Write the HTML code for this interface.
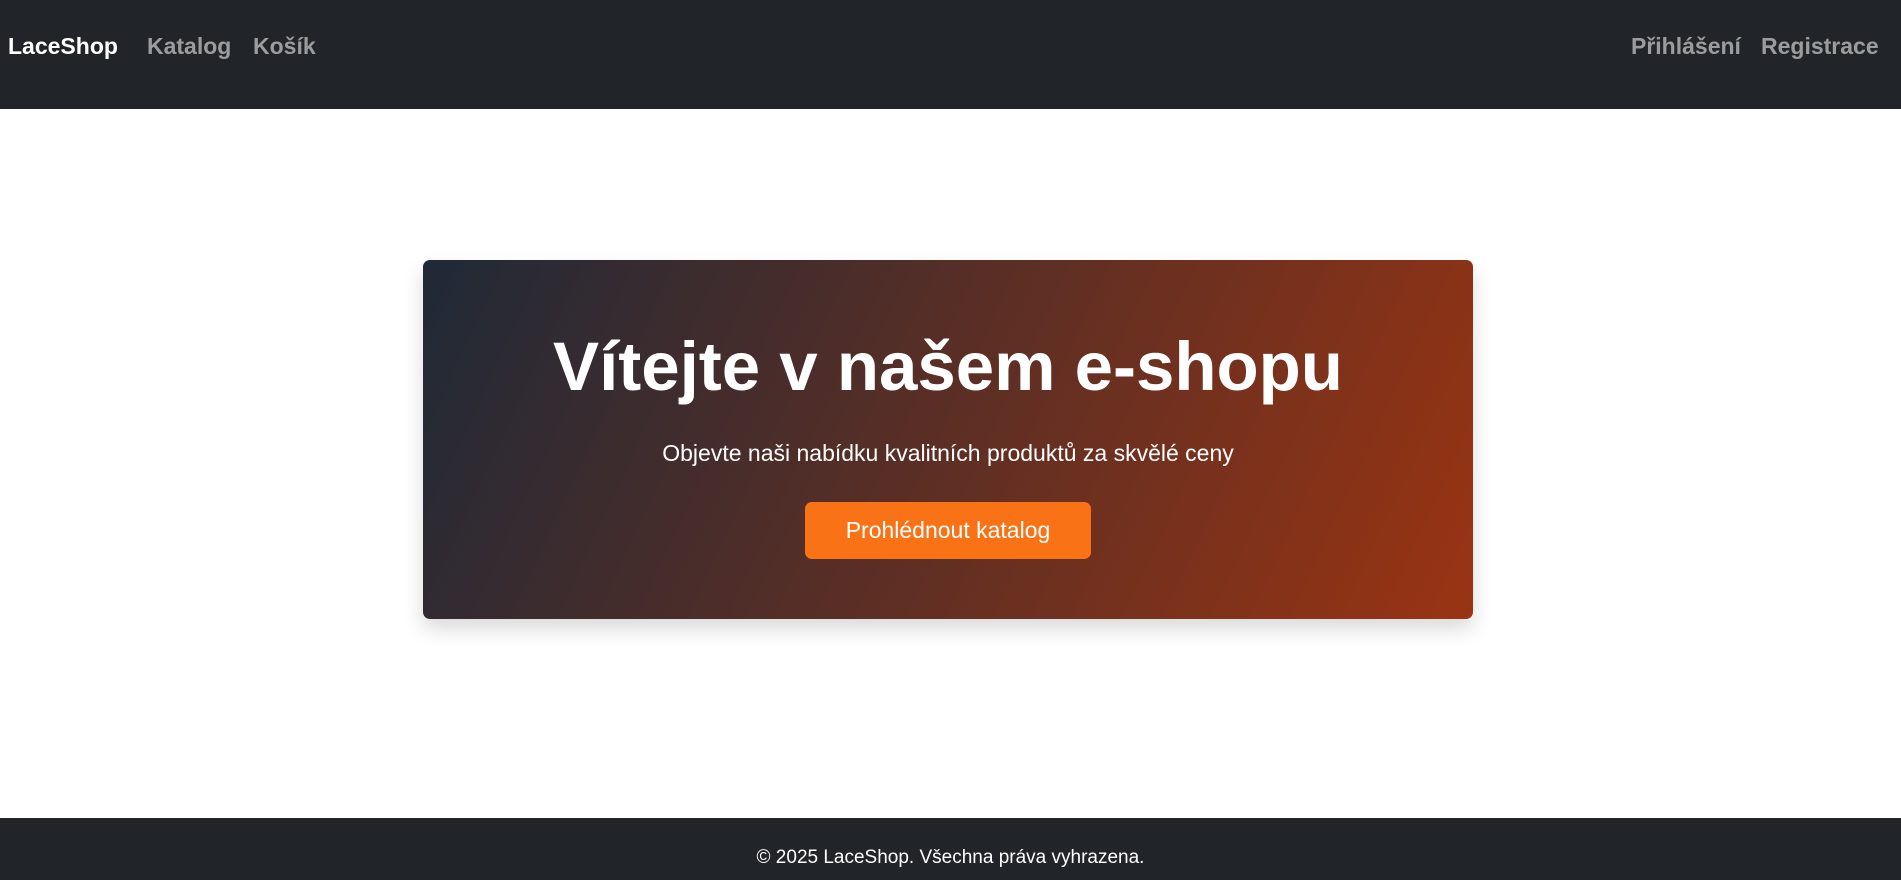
<!DOCTYPE html>
<html><head><meta charset="utf-8"><style>
*{margin:0;padding:0;box-sizing:border-box}
body{width:1901px;height:880px;background:#fff;font-family:"Liberation Sans",sans-serif;position:relative;overflow:hidden}
nav{position:absolute;left:0;top:0;width:1901px;height:109px;background:#212529}
nav span{position:absolute;top:31px;font-size:23px;line-height:30px;color:rgba(255,255,255,.55);white-space:nowrap}
nav .brand{color:#fff;font-weight:bold;left:8px}
.card{position:absolute;left:423px;top:260px;width:1050px;height:359px;border-radius:7px;background:linear-gradient(115deg,#1f2937 0%,#9a3412 100%);box-shadow:0 10px 20px rgba(0,0,0,.15);text-align:center;color:#fff}
h1{position:absolute;left:0;right:0;top:67px;font-size:69px;line-height:80px;font-weight:bold}
p{position:absolute;left:0;right:0;top:178px;font-size:23px;line-height:30px;font-weight:300}
.btn{position:absolute;left:382px;top:242px;width:286px;height:57px;background:#f97316;border-radius:7px;font-size:23px;line-height:57px;color:#fff}
footer{position:absolute;left:0;top:818px;width:1901px;height:62px;background:#212529;color:#fff;font-size:19px;line-height:19px;padding-top:30px;text-align:center}
</style></head><body>
<nav>
<span class="brand">LaceShop</span>
<span style="left:147px;font-weight:bold">Katalog</span>
<span style="left:253px;font-weight:bold">Košík</span>
<span style="left:1631px;font-weight:bold">Přihlášení</span>
<span style="left:1761px;font-weight:bold">Registrace</span>
</nav>
<div class="card">
<h1>Vítejte v našem e-shopu</h1>
<p>Objevte naši nabídku kvalitních produktů za skvělé ceny</p>
<div class="btn">Prohlédnout katalog</div>
</div>
<footer>© 2025 LaceShop. Všechna práva vyhrazena.</footer>
</body></html>
